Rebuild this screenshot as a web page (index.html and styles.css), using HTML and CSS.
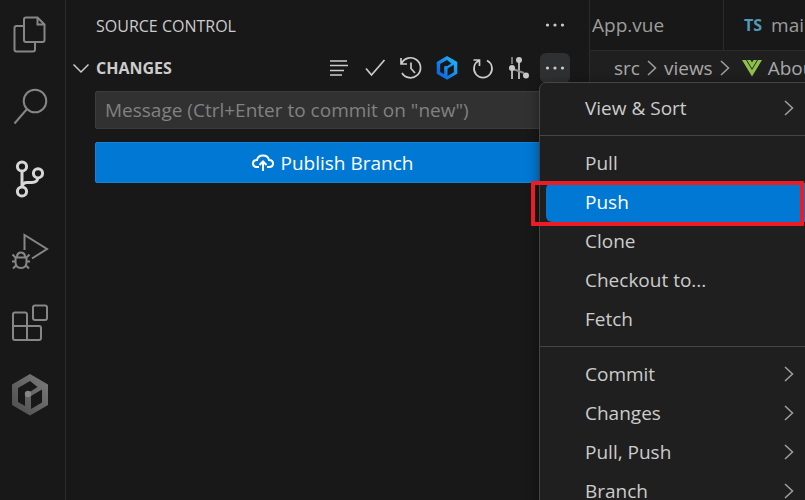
FILE: index.html
```html
<!DOCTYPE html>
<html lang="en">
<head>
  <meta charset="UTF-8" />
  <meta name="viewport" content="width=device-width, initial-scale=1.0" />
  <title>Source Control</title>
  <link rel="stylesheet" href="styles.css">
</head>
<body>
  <nav class="activity-bar">
    <button class="activity" aria-label="Explorer">
      <svg width="36" height="36" viewBox="0 0 36 36"><path d="M11 9H4.500Q2.500 9 2.500 11V32.500Q2.500 34.500 4.500 34.500H21Q23 34.500 23 32.500V26M14 0.500H25.500L32.500 7.500V23Q32.500 25 30.500 25H14Q12 25 12 23V2.500Q12 0.500 14 0.500ZM25.500 0.500V7.500H32.500" /></svg>
    </button>
    <button class="activity" aria-label="Search">
      <svg width="36" height="36" viewBox="0 0 36 36"><circle cx="23" cy="12" r="11.300" /><path d="M15 20L2.500 34.500" /></svg>
    </button>
    <button class="activity active" aria-label="Source Control">
      <svg width="36" height="36" viewBox="0 0 36 36"><circle cx="10" cy="5.500" r="4.600" /><circle cx="26" cy="12.300" r="4.600" /><circle cx="10" cy="30.500" r="4.600" /><path d="M10 10V26M10 26Q11 21.500 15 21.500H20Q25 21.500 26 17" /></svg>
    </button>
    <button class="activity" aria-label="Run and Debug">
      <svg width="36" height="36" viewBox="0 0 36 36"><path d="M12.500 17V2L35 16L20 25.500" /><path d="M3.500 24.500H14.500V29Q14.500 35 9 35T3.500 29ZM5 24Q5 19.500 9 19.500T13 24M0 28.500H3.500M14.500 28.500H18M0.500 21.500L3.500 24.500M17.500 21.500L14.500 24.500M1 35.500L4.500 32M17 35.500L13.500 32" /></svg>
    </button>
    <button class="activity" aria-label="Extensions">
      <svg width="36" height="36" viewBox="0 0 36 36"><path d="M3 7.500H13Q15 7.500 15 9.500V21H27Q29 21 29 23V33Q29 35 27 35H3Q1 35 1 33V9.500Q1 7.500 3 7.500M1 21H15V35" /><rect x="21" y="0.500" width="14" height="14.500" rx="2" /></svg>
    </button>
    <button class="activity" aria-label="Hex Tools">
      <svg class="filled" width="36" height="42" viewBox="0 0 36 42">
        <defs>
          <linearGradient id="gray" x1="1" y1="0" x2="0" y2="1"><stop offset="0" stop-color="#7c7c7c" /><stop offset="1" stop-color="#4b4b4b" /></linearGradient>
        </defs>
        <path fill="url(#gray)" fill-rule="evenodd" d="M18 0L36 10.500V31L18 41.500L0 31V10.500ZM18 7L6 14V28L13 32V21L25.500 13ZM30 15.500L19 22V35L30 28.500Z" />
        <circle cx="16" cy="20" r="3.200" fill="#858585" />
      </svg>
    </button>
  </nav>

  <aside class="side-bar">
    <header class="side-header">
      <h1>SOURCE CONTROL</h1>
      <button class="tool" aria-label="Views and more actions">
        <svg class="dots" width="20" height="20" viewBox="0 0 20 20"><circle cx="2.500" cy="9" r="1.600" /><circle cx="10" cy="9" r="1.600" /><circle cx="17.500" cy="9" r="1.600" /></svg>
      </button>
    </header>

    <div class="section-header">
      <button class="section-title">
        <svg width="16" height="16" viewBox="0 0 16 16"><path d="M0.500 4.500L8 12L15.500 4.500" /></svg>
        CHANGES
      </button>
      <div class="toolbar">
        <button class="tool" aria-label="View as tree">
          <svg width="24" height="24" viewBox="0 0 24 24"><path d="M3 5H20M3 9.500H21M3 14.500H17M3 19H15" /></svg>
        </button>
        <button class="tool" aria-label="Commit">
          <svg width="24" height="24" viewBox="0 0 24 24"><path d="M3 12.500L8.500 19L21.500 4" /></svg>
        </button>
        <button class="tool" aria-label="View history">
          <svg width="24" height="24" viewBox="0 0 24 24"><path d="M2.500 7.500A10 10 0 1 1 3 17M2 2V8H8M12 6.500V12.500L16 17" /></svg>
        </button>
        <button class="tool" aria-label="Hex Tools">
          <svg class="filled" width="24" height="24" viewBox="0 0 36 42">
            <defs>
              <linearGradient id="blue" x1="1" y1="0" x2="0" y2="1"><stop offset="0" stop-color="#24bdff" /><stop offset="1" stop-color="#0757d8" /></linearGradient>
            </defs>
            <path fill="url(#blue)" fill-rule="evenodd" d="M18 0L36 10.500V31L18 41.500L0 31V10.500ZM18 7L6 14V28L13 32V21L25.500 13ZM30 15.500L19 22V35L30 28.500Z" />
            <circle cx="16" cy="20" r="3" fill="#1b8cf5" />
          </svg>
        </button>
        <button class="tool" aria-label="Refresh">
          <svg width="24" height="24" viewBox="0 0 24 24"><path d="M8 4.500A9 9 0 1 0 16 4.500M2.500 4H8.500V10" /></svg>
        </button>
        <button class="tool" aria-label="Git graph">
          <svg class="filled" width="24" height="24" viewBox="0 0 24 24">
            <path fill="#777" d="M4 1H6V8H4Z" />
            <path fill="#b0b0b0" d="M4 14H6V23H4ZM11 6H13V23H11Z" />
            <path stroke="#8c8c8c" stroke-width="2" d="M6 13L17 17" />
            <g fill="#c8c8c8"><circle cx="12" cy="4" r="3" /><circle cx="5" cy="12" r="3" /><circle cx="19" cy="19.500" r="3" /></g>
          </svg>
        </button>
        <div class="dropdown">
          <button class="tool open" aria-label="More actions">
            <svg class="dots" width="20" height="20" viewBox="0 0 20 20"><circle cx="2.500" cy="10" r="1.600" /><circle cx="10" cy="10" r="1.600" /><circle cx="17.500" cy="10" r="1.600" /></svg>
          </button>
          <div class="menu">
            <button class="menu-item">View &amp; Sort <svg class="chevron" width="10" height="16" viewBox="0 0 10 16"><path d="M1 1L8.500 8L1 15" /></svg></button>
            <hr>
            <button class="menu-item">Pull</button>
            <button class="menu-item selected">Push<span class="marker"></span></button>
            <button class="menu-item">Clone</button>
            <button class="menu-item">Checkout to...</button>
            <button class="menu-item">Fetch</button>
            <hr>
            <button class="menu-item">Commit <svg class="chevron" width="10" height="16" viewBox="0 0 10 16"><path d="M1 1L8.500 8L1 15" /></svg></button>
            <button class="menu-item">Changes <svg class="chevron" width="10" height="16" viewBox="0 0 10 16"><path d="M1 1L8.500 8L1 15" /></svg></button>
            <button class="menu-item">Pull, Push <svg class="chevron" width="10" height="16" viewBox="0 0 10 16"><path d="M1 1L8.500 8L1 15" /></svg></button>
            <button class="menu-item">Branch <svg class="chevron" width="10" height="16" viewBox="0 0 10 16"><path d="M1 1L8.500 8L1 15" /></svg></button>
          </div>
        </div>
      </div>
    </div>

    <div class="commit-form">
      <input type="text" aria-label="Commit message" placeholder="Message (Ctrl+Enter to commit on &quot;new&quot;)">
      <button class="publish">
        <svg width="22" height="18" viewBox="0 0 22 18"><path d="M7 13H5Q1 13 1 9.500T5 6Q6 1.500 11 1.500T17 6Q21 6 21 9.500T17 13H15M11 17V7.500M7.500 11L11 7.500L14.500 11" /></svg>
        Publish Branch
      </button>
    </div>
  </aside>

  <main class="editor">
    <div class="tabs">
      <button class="tab first">App.vue</button>
      <button class="tab"><span class="ts">TS</span>main.ts</button>
    </div>
    <div class="breadcrumbs">
      <a href="#">src</a>
      <svg class="chevron" width="10" height="16" viewBox="0 0 10 16"><path d="M1 1L8.500 8L1 15" /></svg>
      <a href="#">views</a>
      <svg class="chevron" width="10" height="16" viewBox="0 0 10 16"><path d="M1 1L8.500 8L1 15" /></svg>
      <a href="#" class="file"><svg class="filled" width="20" height="18" viewBox="0 0 20 18"><path fill="#8dc149" d="M0 1H4L10 11L16 1H20L10 17.500Z" /><path fill="#8dc149" d="M5 1H8.500L10 3.500L11.500 1H15L10 9.500Z" /></svg>AboutView.vue</a>
    </div>
  </main>
</body>
</html>
```

FILE: styles.css
```css
* {
  box-sizing: border-box;
}
body {
  margin: 0;
  height: 100vh;
  display: flex;
  overflow: hidden;
  background-color: #181818;
  color: #cccccc;
  font-family: "Open Sans", "Noto Sans", sans-serif;
  font-size: 19px;
}
button {
  font: inherit;
  color: inherit;
  background: none;
  border: none;
  padding: 0;
  cursor: pointer;
}
svg {
  display: block;
  flex: none;
  fill: none;
  stroke: currentColor;
  stroke-width: 1.5;
}
.filled {
  stroke: none;
}
.dots {
  fill: currentColor;
  stroke: none;
}

/* activity bar */
.activity-bar {
  flex: none;
  width: 66px;
  display: flex;
  flex-direction: column;
  gap: 2px;
  border-right: 1px solid #2b2b2b;
}
.activity {
  height: 70px;
  flex: none;
  display: flex;
  align-items: center;
  padding-left: 12px;
  color: #868686;
}
.activity svg {
  stroke-width: 2;
  overflow: visible;
}
.activity .filled {
  stroke: none;
}
.activity.active {
  color: #d7d7d7;
}
.activity.active svg {
  stroke-width: 3;
}

/* side bar */
.side-bar {
  flex: none;
  width: 523px;
}
.side-header {
  height: 52px;
  padding: 0 19px 0 30px;
  display: flex;
  align-items: center;
  justify-content: space-between;
}
.side-header h1 {
  margin: 0;
  font-size: 16px;
  font-weight: normal;
}
.section-header {
  height: 32px;
  padding: 0 19px 0 7px;
  display: flex;
  align-items: center;
  justify-content: space-between;
}
.section-title {
  display: flex;
  align-items: center;
  gap: 7px;
  font-size: 16px;
  font-weight: bold;
}
.toolbar {
  display: flex;
  gap: 6px;
}
.tool {
  width: 30px;
  height: 30px;
  display: flex;
  align-items: center;
  justify-content: center;
  border-radius: 6px;
}
.toolbar .tool svg {
  stroke-width: 1.7;
}
.tool.open {
  background-color: #2e3031;
}
.commit-form {
  padding: 7px 19px 0 29px;
  display: flex;
  flex-direction: column;
  gap: 13px;
}
.commit-form input {
  height: 38px;
  padding: 0 9px;
  font: inherit;
  color: #cccccc;
  background-color: #313131;
  border: 1px solid #3c3c3c;
  border-radius: 2px;
}
.commit-form input::placeholder {
  color: #818181;
}
.publish {
  height: 41px;
  display: flex;
  align-items: center;
  justify-content: center;
  gap: 7px;
  color: white;
  background-color: #0078d4;
  border: 1px solid #1683d8;
  border-radius: 2px;
}
.publish svg {
  stroke-width: 2;
}

/* dropdown menu */
.dropdown {
  position: relative;
}
.menu {
  position: absolute;
  top: 29px;
  left: -1px;
  z-index: 10;
  width: 280px;
  padding: 6px 0;
  background-color: #1f1f1f;
  border: 1px solid #454545;
  border-radius: 7px;
  box-shadow: 0 2px 12px rgba(0, 0, 0, 0.4);
}
.menu hr {
  margin: 7px 0 8px;
  border: none;
  border-top: 1px solid #454545;
}
.menu-item {
  position: relative;
  display: flex;
  align-items: center;
  justify-content: space-between;
  width: 266px;
  height: 39px;
  margin: 0 6px;
  padding: 0 18px 2px 39px;
  border-radius: 6px;
}
.menu-item.selected {
  color: white;
  background-color: #0078d4;
}
.marker {
  position: absolute;
  top: -2px;
  left: -15px;
  width: 273px;
  height: 45px;
  border: 4px solid #ec1c24;
  border-radius: 1px;
}
.chevron {
  color: #a0a0a0;
}

/* editor */
.editor {
  flex: 1;
  min-width: 0;
  overflow: hidden;
  background-color: #1f1f1f;
  border-left: 1px solid #2b2b2b;
}
.tabs {
  height: 51px;
  display: flex;
  background-color: #181818;
  border-bottom: 1px solid #2b2b2b;
  color: #9d9d9d;
}
.tab {
  flex: none;
  display: flex;
  align-items: center;
  gap: 9px;
  padding: 0 20px;
}
.tab.first {
  width: 134px;
  padding-left: 2px;
  border-right: 1px solid #2b2b2b;
}
.ts {
  font-size: 16px;
  font-weight: bold;
  color: #519aba;
}
.breadcrumbs {
  height: 34px;
  padding-left: 24px;
  display: flex;
  align-items: center;
  gap: 7px;
  color: #a9a9a9;
}
.breadcrumbs a {
  flex: none;
  color: inherit;
  text-decoration: none;
}
.breadcrumbs .file {
  display: flex;
  align-items: center;
  gap: 6px;
  margin-left: 5px;
}
```
